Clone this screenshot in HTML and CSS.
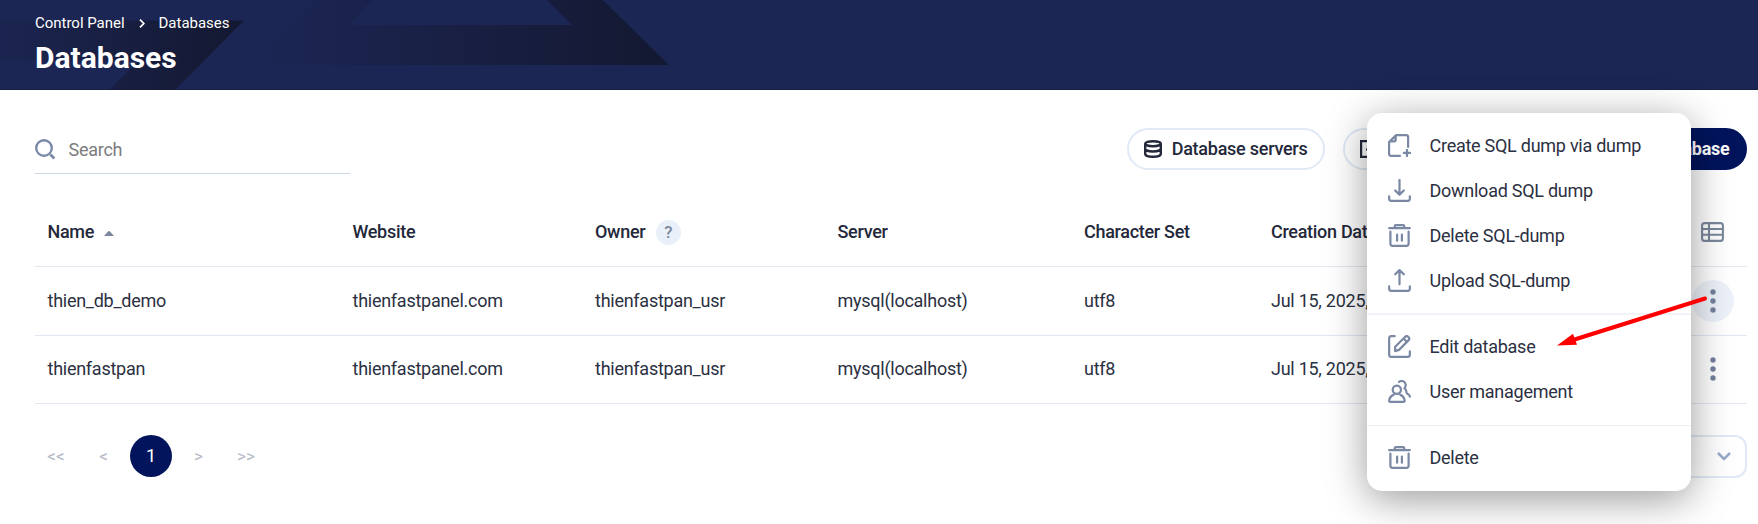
FILE: index.html
```
<!DOCTYPE html>
<html lang="en">
<head>
<meta charset="utf-8">
<title>Databases</title>
<link rel="stylesheet" href="styles.css">
</head>
<body>
<svg class="defs" width="0" height="0">
  <symbol id="trash" viewBox="0 0 24 24"><path d="M1.200 4.200h21.600M7 3.600V2.600c0-.8.6-1.400 1.400-1.400h7.200c.8 0 1.400.6 1.400 1.400v1M2.500 8v12.700c0 1.300.8 2.100 2.100 2.100h14.800c1.300 0 2.100-.8 2.100-2.100V8M9.500 11v6.500M14.500 11v6.500"/></symbol>
  <symbol id="dots" viewBox="0 0 6 24"><circle cx="3" cy="3" r="2.700"/><circle cx="3" cy="12" r="2.700"/><circle cx="3" cy="21" r="2.700"/></symbol>
</svg>
<header class="header">
  <svg class="header-art" width="700" height="90" viewBox="0 0 700 90">
    <defs>
      <linearGradient id="g1" gradientUnits="userSpaceOnUse" x1="-30" y1="0" x2="225" y2="0"><stop offset="0" stop-color="#141933" stop-opacity="0"/><stop offset="1" stop-color="#141933"/></linearGradient>
      <linearGradient id="g2" gradientUnits="userSpaceOnUse" x1="260" y1="0" x2="640" y2="0"><stop offset="0" stop-color="#141933" stop-opacity="0"/><stop offset="1" stop-color="#141933"/></linearGradient>
    </defs>
    <path fill="url(#g1)" d="M0 20.500H244L175 90H109L139 60.500H0Z"/>
    <path fill="url(#g2)" d="M316 0H372L349 25H572L547 0H603L669 65H250Z"/>
  </svg>
  <nav class="crumbs"><span>Control Panel</span><svg width="6" height="9" viewBox="0 0 6 9"><path d="M1 .7l3.800 3.800L1 8.300" fill="none" stroke="#fff" stroke-width="1.700"/></svg><span>Databases</span></nav>
  <h1 class="title">Databases</h1>
</header>
<main class="main">
  <div class="toolbar">
    <div class="search">
      <svg width="21" height="21" viewBox="0 0 21 21" fill="none" stroke="#7b89a8" stroke-width="2.400"><circle cx="9" cy="9" r="7.800"/><path d="M15.300 15.500l4 4" stroke-width="2.800"/></svg>
      <span>Search</span>
    </div>
    <div class="actions">
      <div class="btn">
        <svg width="18" height="18" viewBox="0 0 18 18" fill="none" stroke="#23283a" stroke-width="2.400"><ellipse cx="9" cy="3.700" rx="7.800" ry="2.500"/><path d="M1.200 3.700v10.400c0 1.600 3.500 2.700 7.800 2.700s7.800-1.100 7.800-2.700V3.700M1.200 8.800c0 1.600 3.500 2.700 7.800 2.700s7.800-1.100 7.800-2.700"/></svg>
        <span>Database servers</span>
      </div>
      <div class="btn btn-import">
        <svg width="18" height="18" viewBox="0 0 18 18" fill="none" stroke="#23283a" stroke-width="2.200"><path d="M10 1.100H1.100v15.800h15.800V9M6 9.500h2"/></svg>
      </div>
      <div class="btn btn-primary"><span>database</span></div>
    </div>
  </div>
  <div class="table">
    <div class="row head">
      <div>Name<svg class="sort" width="10" height="5" viewBox="0 0 10 5"><path d="M0 5L4 .5Q5-.3 6 .5L10 5Z" fill="#7b879b"/></svg></div>
      <div>Website</div><div>Owner<span class="help">?</span></div><div>Server</div><div>Character Set</div><div>Creation Date</div>
      <div class="end"><span class="round"><svg width="23" height="20" viewBox="0 0 23 20" fill="none" stroke="#7b879b" stroke-width="2.100"><rect x="1.100" y="1.100" width="20.800" height="17.800" rx="2.500"/><path d="M1 7h21M1 12.700h21M8 1v18"/></svg></span></div>
    </div>
    <div class="row first">
      <div>thien_db_demo</div><div>thienfastpanel.com</div><div>thienfastpan_usr</div><div>mysql(localhost)</div><div>utf8</div><div>Jul 15, 2025,</div>
      <div class="end"><span class="round active"><svg width="6" height="24" fill="#75829e"><use href="#dots"/></svg></span></div>
    </div>
    <div class="row last">
      <div>thienfastpan</div><div>thienfastpanel.com</div><div>thienfastpan_usr</div><div>mysql(localhost)</div><div>utf8</div><div>Jul 15, 2025,</div>
      <div class="end"><span class="round"><svg width="6" height="24" fill="#75829e"><use href="#dots"/></svg></span></div>
    </div>
  </div>
  <div class="footer">
    <div class="pages"><span>&lt;&lt;</span><span>&lt;</span><span class="current">1</span><span>&gt;</span><span>&gt;&gt;</span></div>
    <div class="select"><svg width="14" height="9" viewBox="0 0 14 9" fill="none" stroke="#9aa9c7" stroke-width="2.500"><path d="M1 1l6 6 6-6"/></svg></div>
  </div>
</main>
<div class="menu">
  <div class="item"><svg viewBox="0 0 24 24"><path d="M12.500 22.800H3.200c-1.400 0-2.100-.8-2.100-2.100V8.500L8.300 1.200h10.600c1.400 0 2.100.7 2.100 2.100v10.200M8 1.800v4.300c0 1.100-.6 1.700-1.700 1.700H1.900M19.800 16.500v6.500M16.500 19.800h6.500"/></svg>Create SQL dump via dump</div>
  <div class="item"><svg viewBox="0 0 24 24"><path d="M12 1v15M7.500 12l4.500 4.300 4.500-4.300M1.200 18v2.700c0 1.300.8 2.100 2.100 2.100h17.400c1.300 0 2.100-.8 2.100-2.100V18"/></svg>Download SQL dump</div>
  <div class="item"><svg viewBox="0 0 24 24"><use href="#trash"/></svg>Delete SQL-dump</div>
  <div class="item"><svg viewBox="0 0 24 24"><path d="M12 16V1.500M7.500 5.500L12 1.200l4.500 4.300M1.200 18v2.700c0 1.300.8 2.100 2.100 2.100h17.400c1.300 0 2.100-.8 2.100-2.100V18"/></svg>Upload SQL-dump</div>
  <div class="sep sep-strong"></div>
  <div class="item"><svg viewBox="0 0 24 24"><path d="M7 1.200H3.300c-1.300 0-2.100.8-2.100 2.100v17.400c0 1.300.8 2.100 2.100 2.100h17.400c1.300 0 2.100-.8 2.100-2.100V17M7.500 16.800v-4.600L17.700 2c1-1 2.600-1 3.600 0s1 2.600 0 3.600L11.500 15.500 7.500 16.800ZM16.800 4.200l2.500 2.500"/></svg>Edit database</div>
  <div class="item"><svg viewBox="0 0 24 24"><circle cx="9.200" cy="10.200" r="4.300"/><path d="M5.800 15.500C3.300 16.500 1.500 18.600 1.200 21.500c-.1.800.4 1.300 1.200 1.300h13.800c.8 0 1.300-.5 1.200-1.300-.3-2.900-2.100-5-4.600-6M11.500 2c3-2 6.700-.6 7 3 .1 1.300-.3 2.400-1.300 3.700 1.400.8 1.900 1.800 1.900 3.200 0 1.800.6 2.500 1.900 3 1 .4 1.600 1.200 1.800 2.400"/></svg>User management</div>
  <div class="sep sep-last"></div>
  <div class="item"><svg viewBox="0 0 24 24"><use href="#trash"/></svg>Delete</div>
</div>
<svg class="arrow" width="160" height="60" viewBox="1550 290 160 60"><path d="M1705 298.500L1573 340" stroke="#f00" stroke-width="4" stroke-linecap="round"/><path d="M1557 345.500L1573 333.700L1577 344.800Z" fill="#f00"/></svg>
</body>
</html>
```
FILE: styles.css
```
* { box-sizing: border-box; }
body {
  margin: 0;
  height: 524px;
  overflow: hidden;
  position: relative;
  background: #fff;
  color: #2b3042;
  font: 18px/24px Roboto, sans-serif;
  letter-spacing: -0.26px;
}
svg { display: block; flex: none; }
.defs { position: absolute; }
.header {
  position: relative;
  height: 90px;
  padding: 13px 35px 0;
  background: #1c2654;
  border-bottom: 1px solid #182044;
  color: #fff;
}
.header-art { position: absolute; left: 0; top: 0; }
.crumbs {
  position: relative;
  display: flex;
  align-items: center;
  gap: 14px;
  font-size: 15px;
  line-height: 20px;
  letter-spacing: -0.02px;
}
.title {
  position: relative;
  margin: 6px 0 0;
  font-size: 30px;
  line-height: 38px;
  font-weight: 700;
  letter-spacing: 0;
}
.main { padding: 38px 11px 0 35px; }
.toolbar { display: flex; justify-content: space-between; align-items: flex-start; }
.search {
  width: 315px;
  height: 46px;
  display: flex;
  align-items: center;
  gap: 12.500px;
  padding-bottom: 2px;
  border-bottom: 1px solid #ccd7e6;
  color: #7c7c7c;
}
.actions { display: flex; gap: 18px; }
.btn {
  height: 42px;
  display: flex;
  align-items: center;
  gap: 9.500px;
  padding: 0 15.500px 0 15px;
  border: 2px solid #e0e9f5;
  border-radius: 21px;
  color: #23283a;
  font-weight: 500;
  letter-spacing: -0.25px;
}
.btn-import { width: 182px; }
.btn-primary {
  width: 204px;
  justify-content: flex-end;
  background: #02145c;
  border-color: #02145c;
  color: #fff;
  font-weight: 700;
}
.table { margin-top: 24px; }
.row {
  display: grid;
  grid-template-columns: 305px 242.500px 242.500px 246.500px 187px 1fr 68px;
  align-items: center;
  height: 69px;
  border-bottom: 1px solid #e1e8f2;
}
.row > div { display: flex; align-items: center; padding-left: 12.500px; }
.row.head { font-weight: 500; color: #23283a; letter-spacing: -0.3px; }
.row.last { height: 68px; padding-bottom: 1px; }
.row > .end { justify-content: flex-end; padding: 0 13.500px 0 0; }
.sort { margin: 3px 0 0 10px; }
.help {
  width: 25px;
  height: 25px;
  margin-left: 10.500px;
  border-radius: 50%;
  background: #e9f0fa;
  color: #7b879b;
  text-align: center;
  line-height: 25px;
  font-size: 17px;
}
.round {
  width: 42px;
  height: 42px;
  border-radius: 50%;
  display: flex;
  align-items: center;
  justify-content: center;
}
.round.active { background: #edf2fa; }
.footer {
  display: flex;
  justify-content: space-between;
  align-items: flex-start;
  margin-top: 31px;
}
.pages { display: flex; color: #b5bac6; letter-spacing: 0; }
.pages span {
  min-width: 42px;
  height: 42px;
  line-height: 42px;
  text-align: center;
  margin-right: 5.500px;
  font-size: 17px;
}
.pages .current { border-radius: 50%; background: #02145c; color: #fff; font-size: 18px; }
.select {
  width: 100px;
  height: 43px;
  display: flex;
  align-items: center;
  justify-content: flex-end;
  padding-right: 14px;
  border: 2px solid #e0e9f5;
  border-radius: 12px;
}
.menu {
  position: absolute;
  left: 1367px;
  top: 113px;
  width: 324px;
  height: 378px;
  padding: 10px 0;
  border-radius: 15px;
  background: #fff;
  box-shadow: 0 8px 40px rgba(0, 0, 0, .4);
}
.item {
  height: 45px;
  display: flex;
  align-items: center;
  gap: 18.500px;
  padding-left: 21px;
}
.item svg {
  width: 23px;
  height: 23px;
  fill: none;
  stroke: #7a88a3;
  stroke-width: 2.300;
  stroke-linecap: round;
  stroke-linejoin: round;
}
.sep { height: 1px; margin: 10px 0; background: #edf1f6; }
.sep-strong { height: 2px; margin-bottom: 9px; background: #f0f4f9; }
.sep-last { margin: 11px 0 9px; }
.arrow { position: absolute; left: 1550px; top: 290px; }
```
